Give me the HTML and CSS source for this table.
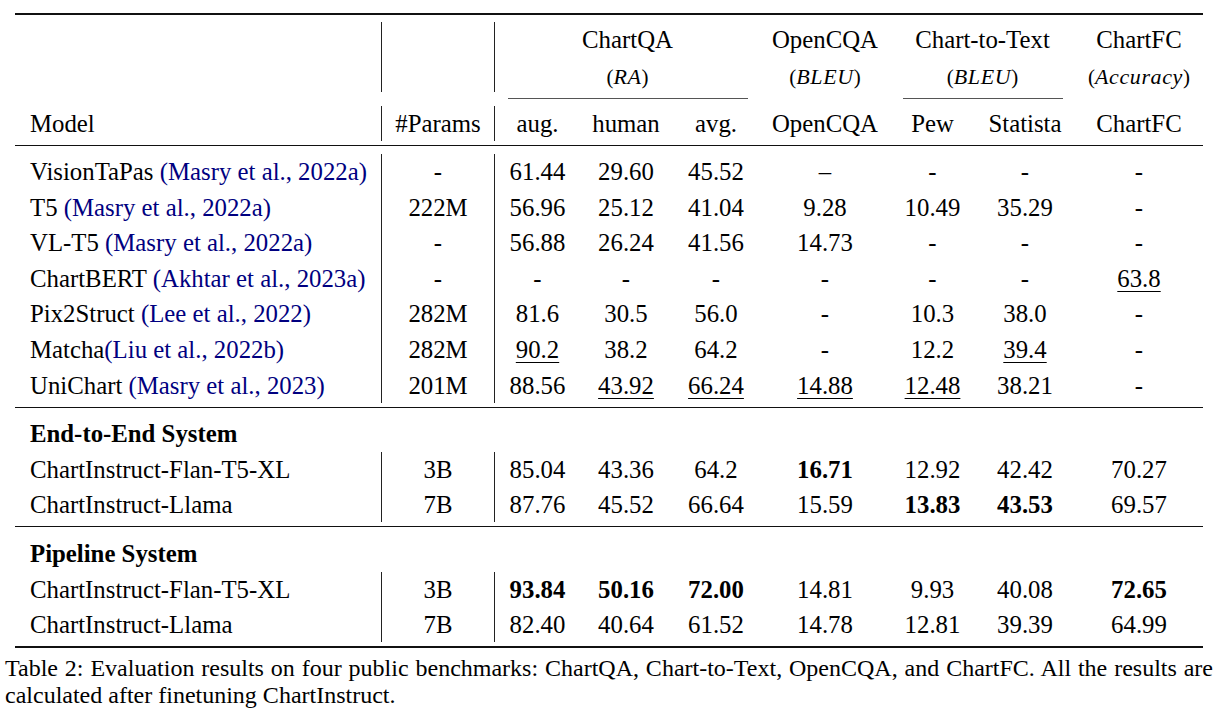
FILE: index.html
```html
<!DOCTYPE html>
<html>
<head>
<meta charset="utf-8">
<link rel="stylesheet" href="styles.css">
</head>
<body>
<div class="page">
  <div class="tbl">
    <div class="rule heavy top"></div>

    <div class="row hdr-top">
      <div class="cell c-model vl"></div>
      <div class="cell c-params vl"></div>
      <div class="grp span3"><div class="gname">ChartQA</div><div class="gmetric">(<i>RA</i>)</div></div>
      <div class="grp"><div class="gname">OpenCQA</div><div class="gmetric">(<i>BLEU</i>)</div></div>
      <div class="grp span2"><div class="gname">Chart-to-Text</div><div class="gmetric">(<i>BLEU</i>)</div></div>
      <div class="grp"><div class="gname">ChartFC</div><div class="gmetric">(<i>Accuracy</i>)</div></div>
    </div>

    <div class="row cmid">
      <div></div><div></div>
      <div class="span3"><div class="cline"></div></div>
      <div></div>
      <div class="span2"><div class="cline"></div></div>
      <div></div>
    </div>

    <div class="row hdr">
      <div class="cell c-model vl">Model</div>
      <div class="cell c-params vl">#Params</div>
      <div class="cell">aug.</div>
      <div class="cell">human</div>
      <div class="cell">avg.</div>
      <div class="cell">OpenCQA</div>
      <div class="cell">Pew</div>
      <div class="cell">Statista</div>
      <div class="cell">ChartFC</div>
    </div>

    <div class="rule mid first"></div>

    <div class="body body-main">
      <div class="row">
        <div class="cell c-model vl">VisionTaPas <span class="cite">(Masry et al., 2022a)</span></div>
        <div class="cell c-params vl">-</div>
        <div class="cell">61.44</div><div class="cell">29.60</div><div class="cell">45.52</div>
        <div class="cell">–</div><div class="cell">-</div><div class="cell">-</div><div class="cell">-</div>
      </div>
      <div class="row">
        <div class="cell c-model vl">T5 <span class="cite">(Masry et al., 2022a)</span></div>
        <div class="cell c-params vl">222M</div>
        <div class="cell">56.96</div><div class="cell">25.12</div><div class="cell">41.04</div>
        <div class="cell">9.28</div><div class="cell">10.49</div><div class="cell">35.29</div><div class="cell">-</div>
      </div>
      <div class="row">
        <div class="cell c-model vl">VL-T5 <span class="cite">(Masry et al., 2022a)</span></div>
        <div class="cell c-params vl">-</div>
        <div class="cell">56.88</div><div class="cell">26.24</div><div class="cell">41.56</div>
        <div class="cell">14.73</div><div class="cell">-</div><div class="cell">-</div><div class="cell">-</div>
      </div>
      <div class="row">
        <div class="cell c-model vl">ChartBERT <span class="cite">(Akhtar et al., 2023a)</span></div>
        <div class="cell c-params vl">-</div>
        <div class="cell">-</div><div class="cell">-</div><div class="cell">-</div>
        <div class="cell">-</div><div class="cell">-</div><div class="cell">-</div><div class="cell"><span class="ul">63.8</span></div>
      </div>
      <div class="row">
        <div class="cell c-model vl">Pix2Struct <span class="cite">(Lee et al., 2022)</span></div>
        <div class="cell c-params vl">282M</div>
        <div class="cell">81.6</div><div class="cell">30.5</div><div class="cell">56.0</div>
        <div class="cell">-</div><div class="cell">10.3</div><div class="cell">38.0</div><div class="cell">-</div>
      </div>
      <div class="row">
        <div class="cell c-model vl">Matcha<span class="cite">(Liu et al., 2022b)</span></div>
        <div class="cell c-params vl">282M</div>
        <div class="cell"><span class="ul">90.2</span></div><div class="cell">38.2</div><div class="cell">64.2</div>
        <div class="cell">-</div><div class="cell">12.2</div><div class="cell"><span class="ul">39.4</span></div><div class="cell">-</div>
      </div>
      <div class="row">
        <div class="cell c-model vl">UniChart <span class="cite">(Masry et al., 2023)</span></div>
        <div class="cell c-params vl">201M</div>
        <div class="cell">88.56</div><div class="cell"><span class="ul">43.92</span></div><div class="cell"><span class="ul">66.24</span></div>
        <div class="cell"><span class="ul">14.88</span></div><div class="cell"><span class="ul">12.48</span></div><div class="cell">38.21</div><div class="cell">-</div>
      </div>
    </div>

    <div class="rule mid"></div>
    <div class="section">End-to-End System</div>
    <div class="body body-sub">
      <div class="row">
        <div class="cell c-model vl">ChartInstruct-Flan-T5-XL</div>
        <div class="cell c-params vl">3B</div>
        <div class="cell">85.04</div><div class="cell">43.36</div><div class="cell">64.2</div>
        <div class="cell"><b>16.71</b></div><div class="cell">12.92</div><div class="cell">42.42</div><div class="cell">70.27</div>
      </div>
      <div class="row">
        <div class="cell c-model vl">ChartInstruct-Llama</div>
        <div class="cell c-params vl">7B</div>
        <div class="cell">87.76</div><div class="cell">45.52</div><div class="cell">66.64</div>
        <div class="cell">15.59</div><div class="cell"><b>13.83</b></div><div class="cell"><b>43.53</b></div><div class="cell">69.57</div>
      </div>
    </div>

    <div class="rule mid"></div>
    <div class="section second">Pipeline System</div>
    <div class="body body-sub">
      <div class="row">
        <div class="cell c-model vl">ChartInstruct-Flan-T5-XL</div>
        <div class="cell c-params vl">3B</div>
        <div class="cell"><b>93.84</b></div><div class="cell"><b>50.16</b></div><div class="cell"><b>72.00</b></div>
        <div class="cell">14.81</div><div class="cell">9.93</div><div class="cell">40.08</div><div class="cell"><b>72.65</b></div>
      </div>
      <div class="row">
        <div class="cell c-model vl">ChartInstruct-Llama</div>
        <div class="cell c-params vl">7B</div>
        <div class="cell">82.40</div><div class="cell">40.64</div><div class="cell">61.52</div>
        <div class="cell">14.78</div><div class="cell">12.81</div><div class="cell">39.39</div><div class="cell">64.99</div>
      </div>
    </div>

    <div class="rule heavy bottom"></div>
  </div>

  <p class="caption">Table 2: Evaluation results on four public benchmarks: ChartQA, Chart-to-Text, OpenCQA, and ChartFC. All the results are calculated after finetuning ChartInstruct.</p>
</div>
</body>
</html>
```

FILE: styles.css
```css
html, body {
  margin: 0;
  padding: 0;
  background: #ffffff;
}

body {
  font-family: "Liberation Serif", "Times New Roman", serif;
  font-size: 24.8px;
  color: #000;
}

.page {
  padding: 13px 0 0 5px;
  width: 1208px;
}

.tbl {
  margin-left: 10px;
  width: 1188px;
}

.row {
  display: grid;
  grid-template-columns: 367px 113px 85px 92px 88px 130px 85px 100px 128px;
}

.cell {
  text-align: center;
  white-space: nowrap;
}

.cell.c-model {
  text-align: left;
  padding-left: 15px;
}

.vl {
  border-right: 1px solid #222;
}

.span3 { grid-column: span 3; }
.span2 { grid-column: span 2; }

/* rules */
.rule { background: #111; }
.rule.heavy { height: 2px; }
.rule.mid { height: 1px; margin-top: 4px; }
.rule.mid.first { margin-top: 4px; }
.rule.bottom { margin-top: 4px; }

/* header */
.hdr-top {
  margin-top: 7px;
  height: 70px;
}

.grp {
  text-align: center;
  white-space: nowrap;
}

.gname {
  line-height: 36px;
}

.gmetric {
  margin-top: 4px;
  line-height: 30px;
  font-size: 21px;
}

.gmetric i {
  font-style: italic;
  font-size: 22px;
  letter-spacing: 0.6px;
}

.cmid {
  height: 14px;
}

.cline {
  margin: 6px 12px 0 13px;
  height: 1px;
  background: #555;
}

.hdr {
  line-height: 35px;
}

/* body */
.body-main {
  margin-top: 8px;
}

.body-main .row {
  line-height: 35.6px;
}

.body-sub .row {
  line-height: 35px;
}

.cite {
  color: #000080;
}

.ul {
  text-decoration: underline;
  text-decoration-thickness: 1px;
  text-underline-offset: 4px;
}

b {
  font-weight: bold;
}

.section {
  font-weight: bold;
  padding: 8px 0 0 15px;
  line-height: 36px;
}

.section.second {
  padding-top: 9px;
}

/* caption */
.caption {
  margin: 7px 0 0 0;
  font-size: 24px;
  line-height: 27px;
  text-align: justify;
}
```
